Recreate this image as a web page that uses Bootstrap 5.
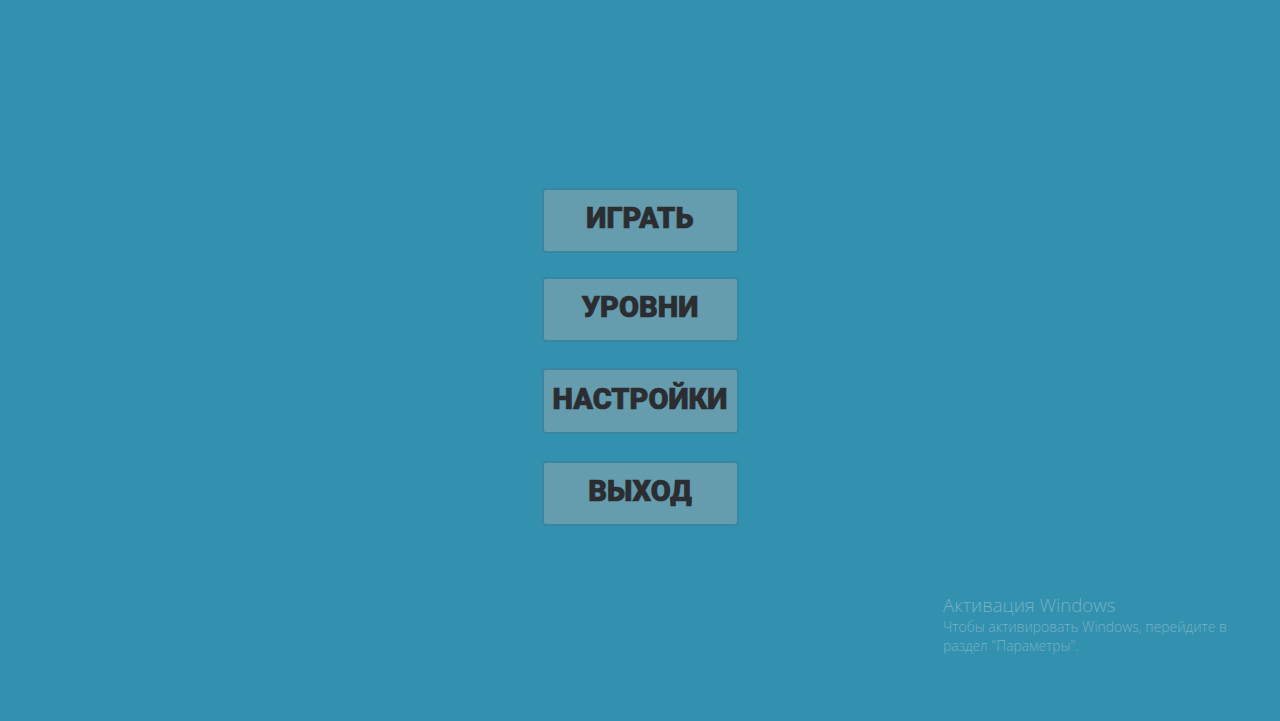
<!DOCTYPE html>
<html lang="ru">
<head>
<meta charset="utf-8">
<title>Меню</title>
<link href="https://cdn.jsdelivr.net/npm/bootstrap@5.3.0/dist/css/bootstrap.min.css" rel="stylesheet">
<style>
html,body{height:100%;}
body{background:#3291af;overflow:hidden;position:relative;}
.menu-stack{padding-top:188px;width:197px;}
.menu-btn{height:65px;width:197px;background:#659cae;border:2px solid #3a86a2;border-radius:4px;color:#2b2d30;font-family:Roboto,sans-serif;font-weight:900;font-size:29px;line-height:1;padding:0 0 4px;text-transform:uppercase;white-space:nowrap;-webkit-text-stroke:.7px #2b2d30;}
.menu-btn:hover,.menu-btn:active{background:#659cae!important;border-color:#3a86a2!important;color:#2b2d30!important;}
.gap-a{margin-bottom:24px;}
.gap-b{margin-bottom:26px;}
.gap-c{margin-bottom:27px;height:66px;}
.activation{position:absolute;left:943px;top:594px;color:#78b0c4;font-family:"Open Sans",sans-serif;font-weight:300;}
.activation-title{font-size:18.6px;line-height:22px;}
.activation-text{font-size:13.9px;line-height:19px;margin-top:1px;width:300px;}
</style>
</head>
<body>
<main class="d-flex justify-content-center">
<div class="menu-stack d-flex flex-column">
<button class="btn menu-btn gap-a" type="button">Играть</button>
<button class="btn menu-btn gap-b" type="button">Уровни</button>
<button class="btn menu-btn gap-c" type="button">Настройки</button>
<button class="btn menu-btn" type="button">Выход</button>
</div>
</main>
<aside class="activation">
<div class="activation-title">Активация Windows</div>
<div class="activation-text">Чтобы активировать Windows, перейдите в<br>раздел "Параметры".</div>
</aside>
<script src="https://cdn.jsdelivr.net/npm/bootstrap@5.3.0/dist/js/bootstrap.bundle.min.js"></script>
</body>
</html>
